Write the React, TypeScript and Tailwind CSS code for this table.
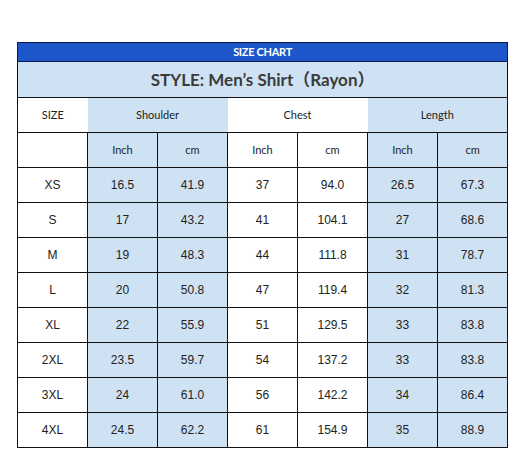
const rows = [
  ["XS", "16.5", "41.9", "37", "94.0", "26.5", "67.3"],
  ["S", "17", "43.2", "41", "104.1", "27", "68.6"],
  ["M", "19", "48.3", "44", "111.8", "31", "78.7"],
  ["L", "20", "50.8", "47", "119.4", "32", "81.3"],
  ["XL", "22", "55.9", "51", "129.5", "33", "83.8"],
  ["2XL", "23.5", "59.7", "54", "137.2", "33", "83.8"],
  ["3XL", "24", "61.0", "56", "142.2", "34", "86.4"],
  ["4XL", "24.5", "62.2", "61", "154.9", "35", "88.9"],
];

// shoulder + length columns are tinted
const tinted = [false, true, true, false, false, true, true];

const calibri = "font-['Lato','Noto_Sans','Noto_Sans_CJK_SC',sans-serif]";

export default function App() {
  return (
    <div className="w-[528px] h-[474px] bg-white pl-[17px] pt-[42px]">
      <table className="border-collapse table-fixed w-[491px] text-center">
        <colgroup>
          {tinted.map((_, i) => (
            <col key={i} className="w-[70px]" />
          ))}
        </colgroup>
        <tbody>
          <tr className="h-[19px]">
            <td
              colSpan={7}
              className={`bg-[#1c56c8] border border-[#0a1a4a] text-white text-[11px] font-bold tracking-[-0.3px] p-0 ${calibri}`}
            >
              SIZE CHART
            </td>
          </tr>
          <tr className="h-[36px]">
            <td
              colSpan={7}
              className={`bg-[#cfe2f3] border border-[#111] text-[#3b3b3b] text-[17px] font-bold p-0 ${calibri}`}
            >
              STYLE: Men’s Shirt（Rayon）
            </td>
          </tr>
          <tr className={`h-[35px] text-[11px] text-[#222] ${calibri}`}>
            <td className="border-y border-l border-[#111] bg-white p-0">SIZE</td>
            <td colSpan={2} className="border-y border-[#111] bg-[#cfe2f3] p-0">
              Shoulder
            </td>
            <td colSpan={2} className="border-y border-[#111] bg-white p-0">
              Chest
            </td>
            <td colSpan={2} className="border-y border-r border-[#111] bg-[#cfe2f3] p-0">
              Length
            </td>
          </tr>
          <tr className={`h-[35px] text-[11px] text-[#222] ${calibri}`}>
            {["", "Inch", "cm", "Inch", "cm", "Inch", "cm"].map((t, i) => (
              <td
                key={i}
                className={`border border-[#111] p-0 ${tinted[i] ? "bg-[#cfe2f3]" : "bg-white"}`}
              >
                {t}
              </td>
            ))}
          </tr>
          {rows.map((r) => (
            <tr key={r[0]} className="h-[35px] text-[12px] text-[#222] font-['Liberation_Sans',Arial,sans-serif]">
              {r.map((v, i) => (
                <td
                  key={i}
                  className={`border border-[#111] p-0 ${tinted[i] ? "bg-[#cfe2f3]" : "bg-white"}`}
                >
                  {v}
                </td>
              ))}
            </tr>
          ))}
        </tbody>
      </table>
    </div>
  );
}
